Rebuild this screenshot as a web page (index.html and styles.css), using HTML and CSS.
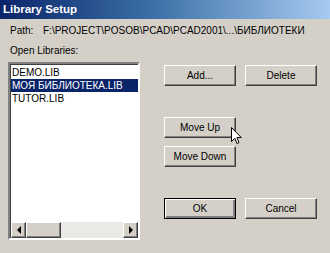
FILE: index.html
```html
<!DOCTYPE html>
<html lang="ru">
<head>
    <meta charset="UTF-8">
    <meta name="viewport" content="width=device-width, initial-scale=1.0">
    <title>Library Setup</title>
    <link rel="stylesheet" href="styles.css">
</head>
<body>
    <div class="dialog">
        <div class="titlebar">Library Setup</div>

        <div class="path-row">
            <span class="path-label">Path:</span>
            <span class="path-value">F:\PROJECT\POSOB\PCAD\PCAD2001\...\БИБЛИОТЕКИ</span>
        </div>

        <div class="main">
            <div class="libs">
                <div class="libs-label">Open Libraries:</div>
                <div class="listbox">
                    <ul class="items">
                        <li>DEMO.LIB</li>
                        <li class="selected">МОЯ БИБЛИОТЕКА.LIB</li>
                        <li>TUTOR.LIB</li>
                    </ul>
                    <div class="hscroll">
                        <div class="sbtn"><span class="arrow-left"></span></div>
                        <div class="thumb"></div>
                        <div class="track"></div>
                        <div class="sbtn"><span class="arrow-right"></span></div>
                    </div>
                </div>
            </div>

            <div class="actions">
                <div class="btn-row">
                    <button class="btn">Add...</button>
                    <button class="btn">Delete</button>
                </div>
                <div class="btn-col">
                    <button class="btn">Move Up</button>
                    <button class="btn">Move Down</button>
                </div>
                <div class="btn-row">
                    <button class="btn default">OK</button>
                    <button class="btn">Cancel</button>
                </div>
            </div>
        </div>

        <svg class="cursor" width="12" height="18" viewBox="0 0 12 18">
            <path d="M0.5 0.5 L0.5 14.5 L3.8 11.3 L6 16.5 L8 15.6 L5.9 10.6 L10.3 10.6 Z" fill="#ffffff" stroke="#000000" stroke-width="1"/>
        </svg>
    </div>
</body>
</html>
```

FILE: styles.css
```css
body {
    margin: 0;
    padding: 0;
    background: #d4d0c8;
}

.dialog {
    position: relative;
    width: 330px;
    height: 253px;
    background: #d4d0c8;
    font-family: 'Liberation Sans', Arial, sans-serif;
    font-size: 10px;
    color: #000000;
    overflow: hidden;
}

.titlebar {
    height: 19px;
    line-height: 19px;
    padding-left: 3px;
    background: linear-gradient(90deg, #0a246a, #3a6ea5 45%, #a6caf0);
    color: #ffffff;
    font-weight: bold;
    font-size: 11.5px;
}

.path-row {
    display: flex;
    margin-top: 5px;
    padding-left: 10px;
    line-height: 13px;
}

.path-label {
    width: 33px;
}

.main {
    display: flex;
    margin-top: 7px;
}

.libs {
    margin-left: 8px;
}

.libs-label {
    padding-left: 2px;
    line-height: 13px;
    margin-bottom: 5px;
}

.listbox {
    width: 128px;
    height: 174px;
    background: #ffffff;
    border: 2px solid;
    border-color: #808080 #ffffff #ffffff #808080;
    box-shadow: inset 1px 1px 0 #404040;
    display: flex;
    flex-direction: column;
    justify-content: space-between;
}

.items {
    list-style: none;
    margin: 2px 0 0 0;
    padding: 0;
}

.items li {
    height: 13px;
    line-height: 13px;
    padding-left: 1px;
    margin-left: 1px;
    white-space: nowrap;
}

.items li.selected {
    background: #0a246a;
    color: #ffffff;
}

.hscroll {
    display: flex;
    height: 16px;
    margin-left: 1px;
}

.sbtn,
.thumb {
    box-sizing: border-box;
    background: #d4d0c8;
    border: 1px solid;
    border-color: #ffffff #404040 #404040 #ffffff;
    box-shadow: inset -1px -1px 0 #808080;
}

.sbtn {
    width: 15px;
    display: flex;
    align-items: center;
    justify-content: center;
}

.thumb {
    width: 35px;
}

.track {
    flex: 1;
    background: #ebe9e5;
}

.arrow-left {
    width: 0;
    height: 0;
    border-top: 4px solid transparent;
    border-bottom: 4px solid transparent;
    border-right: 4px solid #000000;
}

.arrow-right {
    width: 0;
    height: 0;
    border-top: 4px solid transparent;
    border-bottom: 4px solid transparent;
    border-left: 4px solid #000000;
}

.actions {
    margin-left: 24px;
    margin-top: 21px;
    display: flex;
    flex-direction: column;
}

.btn-row {
    display: flex;
    gap: 9px;
}

.btn-col {
    display: flex;
    flex-direction: column;
    gap: 8px;
    margin: 31px 0;
}

.btn {
    box-sizing: border-box;
    width: 72px;
    height: 21px;
    padding: 0;
    font-family: 'Liberation Sans', Arial, sans-serif;
    font-size: 10px;
    color: #000000;
    background: #d4d0c8;
    border: 1px solid;
    border-color: #ffffff #404040 #404040 #ffffff;
    box-shadow: inset -1px -1px 0 #808080;
}

.btn.default {
    border: 1px solid #000000;
    box-shadow: inset 1px 1px 0 #ffffff, inset -2px -2px 0 #808080;
}

.cursor {
    position: absolute;
    left: 231px;
    top: 127px;
}
```
